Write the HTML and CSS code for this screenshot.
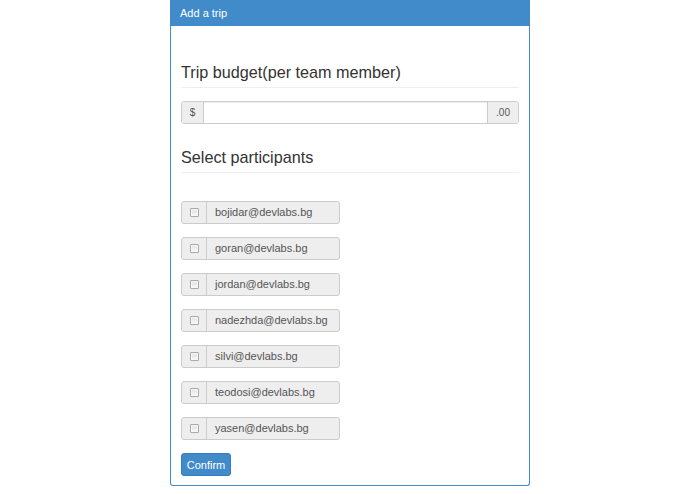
FILE: index.html
```html
<!DOCTYPE html>
<html>
<head>
<meta charset="utf-8">
<title>Add a trip</title>
<link rel="stylesheet" href="styles.css">
</head>
<body>
<div class="panel">
  <div class="panel-heading">Add a trip</div>
  <div class="panel-body">
    <h3 class="section-title first">Trip budget(per team member)</h3>
    <div class="input-group">
      <span class="addon">$</span>
      <input class="field" type="text">
      <span class="addon addon-right">.00</span>
    </div>
    <h3 class="section-title">Select participants</h3>
    <div class="participants">
      <div class="participant"><span class="check"><input type="checkbox"></span><span class="email">bojidar@devlabs.bg</span></div>
      <div class="participant"><span class="check"><input type="checkbox"></span><span class="email">goran@devlabs.bg</span></div>
      <div class="participant"><span class="check"><input type="checkbox"></span><span class="email">jordan@devlabs.bg</span></div>
      <div class="participant"><span class="check"><input type="checkbox"></span><span class="email">nadezhda@devlabs.bg</span></div>
      <div class="participant"><span class="check"><input type="checkbox"></span><span class="email">silvi@devlabs.bg</span></div>
      <div class="participant"><span class="check"><input type="checkbox"></span><span class="email">teodosi@devlabs.bg</span></div>
      <div class="participant"><span class="check"><input type="checkbox"></span><span class="email">yasen@devlabs.bg</span></div>
    </div>
    <button class="btn-confirm" type="button">Confirm</button>
  </div>
</div>
</body>
</html>
```
FILE: styles.css
```css
* { box-sizing: border-box; }
html, body {
  margin: 0;
  padding: 0;
  background: #fff;
  font-family: "Liberation Sans", Arial, sans-serif;
  color: #333;
}
.panel {
  width: 360px;
  margin-left: 170px;
  border: 1px solid #428bca;
  border-top: none;
  border-radius: 0 0 3px 3px;
  background: #fff;
}
.panel-heading {
  height: 26px;
  background: #428bca;
  color: #fff;
  font-size: 11px;
  line-height: 26px;
  padding-left: 10px;
  margin: 0 -1px;
}
.panel-body {
  padding: 0 10px 9px 10px;
}
.section-title {
  margin: 0;
  font-size: 16.2px;
  font-weight: normal;
  line-height: 19px;
  color: #333;
  padding-bottom: 5px;
  border-bottom: 1px solid #eee;
  margin-top: 24px;
}
.section-title.first {
  margin-top: 37px;
}
.input-group {
  display: flex;
  height: 23px;
  margin-top: 13px;
  border: 1px solid #ccc;
  border-radius: 3px;
  overflow: hidden;
}
.addon {
  background: #eee;
  color: #555;
  font-size: 10px;
  display: flex;
  align-items: center;
  justify-content: center;
  width: 22px;
  border-right: 1px solid #ccc;
}
.addon-right {
  width: 31px;
  border-right: none;
  border-left: 1px solid #ccc;
}
.field {
  flex: 1;
  border: none;
  outline: none;
  margin: 0;
  padding: 0;
  background: #fff;
  box-shadow: inset 0 1px 1px rgba(0,0,0,0.075);
}
.participants {
  display: flex;
  flex-direction: column;
  gap: 13px;
  margin-top: 28px;
}
.participant {
  display: flex;
  width: 159px;
  height: 23px;
  border: 1px solid #ccc;
  border-radius: 3px;
  background: #eee;
  overflow: hidden;
}
.check {
  width: 25px;
  display: flex;
  align-items: center;
  justify-content: center;
  border-right: 1px solid #ccc;
}
.check input {
  -webkit-appearance: none;
  appearance: none;
  margin: 0 0 1px 0;
  width: 9px;
  height: 9px;
  border: 1px solid #a9a9a9;
  border-radius: 1px;
  background: linear-gradient(#e4e4e4, #f6f6f6);
  box-shadow: inset 0 0 0 1px #f8f8f8;
}
.email {
  font-size: 11px;
  color: #555;
  line-height: 21px;
  padding-left: 8px;
}
.btn-confirm {
  display: block;
  margin-top: 13px;
  width: 50px;
  height: 23px;
  padding: 0;
  background: #428bca;
  border: 1px solid #357ebd;
  border-radius: 3px;
  color: #fff;
  font-family: "Liberation Sans", Arial, sans-serif;
  font-size: 11px;
}
```
